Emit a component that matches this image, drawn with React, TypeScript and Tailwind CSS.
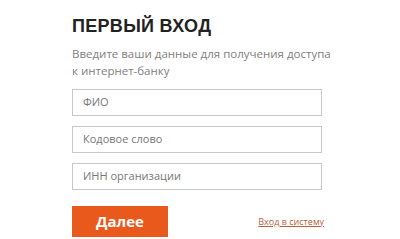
export default function App() {
  return (
    <div className="w-[400px] h-[239px] bg-white overflow-hidden" style={{ fontFamily: '"Open Sans", "Noto Sans", sans-serif' }}>
      <div className="pl-[72px] pt-[15px] w-[322px] box-content">
        <h1 className="text-[18px] leading-[22px] font-extrabold tracking-[0.3px] text-[#222]" style={{ fontFamily: '"Liberation Sans", sans-serif' }}>ПЕРВЫЙ ВХОД</h1>
        <p className="mt-[8px] text-[11.5px] leading-[17px] text-[#808080]">
          Введите ваши данные для получения доступа<br />к интернет-банку
        </p>
        <div className="mt-[10px] flex flex-col gap-[10px] w-[250px]">
          {["ФИО", "Кодовое слово", "ИНН организации"].map((p) => (
            <div key={p} className="h-[27px] border border-[#c8c8c8] flex items-center pl-[10px] text-[11px] text-[#777]">
              {p}
            </div>
          ))}
        </div>
        <div className="mt-[16px] flex items-center justify-between w-[251px]">
          <button className="w-[96px] h-[31px] bg-[#e8591b] text-white text-[15px] font-bold flex items-center justify-center">Далее</button>
          <a className="text-[9px] text-[#b9603a] underline mr-[-1px]">Вход в систему</a>
        </div>
      </div>
    </div>
  );
}
